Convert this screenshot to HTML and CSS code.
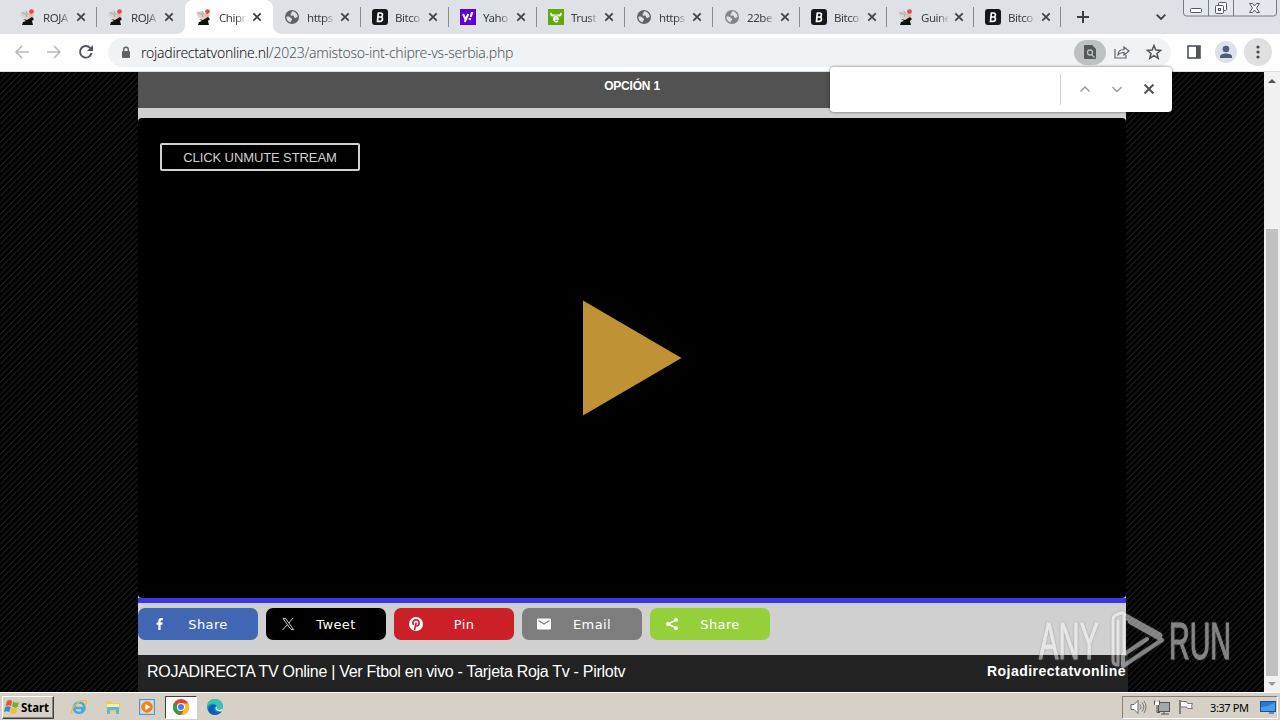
FILE: index.html
```html
<!DOCTYPE html>
<html lang="es">

<head>
    <meta charset="UTF-8">
    <meta name="viewport" content="width=device-width, initial-scale=1.0">
    <title>Chipre vs Serbia</title>
    <link rel="stylesheet" href="styles.css">
</head>

<body>
    <!-- shared icons -->
    <svg class="sprite">
        <symbol id="roja" viewBox="0 0 16 16">
            <path d="M0 3l5-1 4 2 3 1-1 5-4 1-5-3z" fill="#d5d4cf" />
            <path d="M2 4l4 1 1 3M6 2l2 4" stroke="#aaa9a2" fill="none" />
            <path d="M9 4l5 2-2 3-3-1z" fill="#efb5a2" />
            <circle cx="11.500" cy="2.600" r="2.400" fill="#dc4b52" />
            <path d="M3 10l4 1 5-3 2 2-2 2 1 4H2l1-3 3-1z" fill="#111" />
        </symbol>
        <symbol id="globe" viewBox="0 0 16 16">
            <circle cx="8" cy="8" r="7" fill="currentColor" />
            <path d="M8.500 2.300c-1.500.7-1.500 1.600-.5 2-1 .2-1.800.800-1.500 1.700.3.900 1.500.7 2.300.6.900 0 1.200.7 1.300 1.600.2.900 1.500.8 2.300.3l1.200-.5a5.600 5.600 0 0 0-5.100-5.700zM2.500 7.600c1.700-.1 3.600.1 4 1.100.3.900 1.800.6 1.700 1.700 0 .8-1.300.8-1.400 1.600l-.1 1.500A5.600 5.600 0 0 1 2.500 7.600z" fill="#dee1e6" />
        </symbol>
        <symbol id="bit" viewBox="0 0 16 16">
            <rect width="16" height="16" rx="3" fill="#15181b" />
            <path d="M5.700 4h2.800c2.600 0 2.500 3.700.3 4 2.500.3 2.100 4.300-.800 4.300H5.500L6.300 4M6 8h3" stroke="#fff" stroke-width="1.700" fill="none" />
        </symbol>
        <symbol id="yahoo" viewBox="0 0 16 16">
            <rect width="16" height="16" fill="#5f01d1" />
            <path d="M3 5l2.400 5M8.300 5l-3.600 8" stroke="#fff" stroke-width="2" fill="none" />
            <path d="M11 3h2.400l-1.700 5H9.800z" fill="#fff" />
            <circle cx="9.800" cy="10" r="1.200" fill="#fff" />
        </symbol>
        <symbol id="trust" viewBox="0 0 16 16">
            <rect width="16" height="16" fill="#66a80c" />
            <path d="M3.500 3C1 5 2.500 8 5.500 7.500L6.500 6.500h3l1 1C13.500 8 15 5 12.500 3c.4 2-1 2.500-2.500 2.500H6C4.500 5.500 3 5 3.500 3z" fill="#fff" />
            <path d="M5.800 10h4.200c0-3-4.200-3-4.200 0 0 3 3 3.300 4.200 1.700" stroke="#fff" stroke-width="1.500" fill="none" />
        </symbol>
        <symbol id="x" viewBox="0 0 10 10">
            <path d="M1.300 1.300l7.400 7.400M8.700 1.300L1.300 8.700" stroke="currentColor" stroke-width="1.700" />
        </symbol>
    </svg>

    <div class="tabs">
        <div class="tab"><svg class="fav"><use href="#roja" /></svg><span>ROJA</span><svg class="close"><use href="#x" /></svg></div>
        <div class="tab no-line"><svg class="fav"><use href="#roja" /></svg><span>ROJA</span><svg class="close"><use href="#x" /></svg></div>
        <div class="tab active"><svg class="fav"><use href="#roja" /></svg><span>Chipr</span><svg class="close"><use href="#x" /></svg></div>
        <div class="tab"><svg class="fav"><use href="#globe" /></svg><span>https</span><svg class="close"><use href="#x" /></svg></div>
        <div class="tab"><svg class="fav"><use href="#bit" /></svg><span>Bitco</span><svg class="close"><use href="#x" /></svg></div>
        <div class="tab"><svg class="fav"><use href="#yahoo" /></svg><span>Yaho</span><svg class="close"><use href="#x" /></svg></div>
        <div class="tab"><svg class="fav"><use href="#trust" /></svg><span>Trust</span><svg class="close"><use href="#x" /></svg></div>
        <div class="tab"><svg class="fav"><use href="#globe" /></svg><span>https</span><svg class="close"><use href="#x" /></svg></div>
        <div class="tab narrow"><svg class="fav light"><use href="#globe" /></svg><span>22be</span><svg class="close"><use href="#x" /></svg></div>
        <div class="tab narrow"><svg class="fav"><use href="#bit" /></svg><span>Bitco</span><svg class="close"><use href="#x" /></svg></div>
        <div class="tab narrow"><svg class="fav"><use href="#roja" /></svg><span>Guine</span><svg class="close"><use href="#x" /></svg></div>
        <div class="tab narrow"><svg class="fav"><use href="#bit" /></svg><span>Bitco</span><svg class="close"><use href="#x" /></svg></div>
        <svg class="plus" viewBox="0 0 12 12"><path d="M6 0v12M0 6h12" stroke="#3c4043" stroke-width="2" /></svg>
        <svg class="chevron" viewBox="0 0 10 6"><path d="M.7.7L5 5 9.300.7" stroke="#3c4043" stroke-width="1.800" fill="none" /></svg>
        <svg class="window-buttons" viewBox="0 0 94 17">
            <path d="M.5 0v13q0 3 3 3h87q3 0 3-3V0M25.500 0v16M50.500 0v16" stroke="#777b88" fill="#e4e7eb" />
            <g stroke="#535866" fill="#fff">
                <rect x="7.500" y="8.500" width="11" height="4" rx="1" />
                <rect x="35.500" y="2.500" width="8" height="8" rx="1" />
                <rect x="32.500" y="5.500" width="8" height="8" rx="1" />
                <rect x="35.500" y="8.500" width="2" height="2" />
                <path d="M66.500 3.500h3l2 2.500 2-2.500h3l-3 4.500 3 4.500h-3l-2-2.500-2 2.500h-3l3-4.500z" />
            </g>
        </svg>
    </div>

    <div class="toolbar">
        <svg class="nav" viewBox="0 0 16 16"><path d="M15 8H2M8 2L2 8l6 6" /></svg>
        <svg class="nav" viewBox="0 0 16 16"><path d="M1 8h13M8 2l6 6-6 6" /></svg>
        <svg class="nav reload" viewBox="0 0 16 16"><path d="M13.500 9A5.800 5.800 0 1 1 12.200 4l1.500 1.500" /><path class="solid" d="M15 1v6H9z" /></svg>
        <div class="address">
            <svg class="lock" viewBox="0 0 10 13"><rect x="1" y="5" width="8" height="7" rx="1" fill="#5f6368" /><path d="M2.700 5V3.500a2.300 2.300 0 0 1 4.600 0V5" stroke="#5f6368" stroke-width="1.400" fill="none" /></svg>
            <span class="url"><b>rojadirectatvonline.nl</b>/2023/amistoso-int-chipre-vs-serbia.php</span>
            <span class="find-icon">
                <svg width="12" height="14" viewBox="0 0 12 14"><path d="M1 0h7l4 4v9q0 1-1 1H1q-1 0-1-1V1q0-1 1-1z" fill="#53585b" /><circle cx="6" cy="7.500" r="2.500" stroke="#bdc1c1" stroke-width="1.300" fill="none" /><path d="M7.500 9.500l3 3" stroke="#bdc1c1" stroke-width="1.300" /></svg>
            </span>
            <svg class="share-page" viewBox="0 0 16 14"><path d="M1 4v9h11v-3M4 10c0-4 2-5.500 6-5.500V2l5 4-5 4V7.500C7 7.500 5.500 8 4 10z" stroke="#5f6368" stroke-width="1.200" fill="none" /></svg>
            <svg class="star" viewBox="0 0 14 14"><path d="M7 1.300l1.600 4 4.300.3-3.300 2.700 1.100 4.200L7 10.200l-3.700 2.300 1.100-4.200L1.100 5.600l4.300-.3z" stroke="#505459" stroke-width="1.300" fill="none" /></svg>
        </div>
        <svg class="panel" viewBox="0 0 14 14"><rect x="1" y="1" width="12" height="12" stroke="#505459" stroke-width="1.600" fill="none" /><path d="M9 1h4v12H9z" fill="#505459" /></svg>
        <svg class="avatar" viewBox="0 0 22 22"><circle cx="11" cy="11" r="11" fill="#dde1ea" /><circle cx="11" cy="8" r="3.300" fill="#505c7c" /><path d="M5 17v-1.500c0-4 12-4 12 0V17z" fill="#505c7c" /></svg>
        <svg class="menu" viewBox="0 0 28 28"><circle cx="14" cy="14" r="14" fill="#e0e0e0" /><g fill="#45494d"><circle cx="14" cy="9" r="1.600" /><circle cx="14" cy="14" r="1.600" /><circle cx="14" cy="19" r="1.600" /></g></svg>
    </div>

    <div class="viewport">
        <div class="page">
            <div class="option">OPCIÓN 1</div>
            <div class="player">
                <button class="unmute">CLICK UNMUTE STREAM</button>
                <svg class="play" viewBox="0 0 99 116"><path d="M0 .5L98.500 58 0 115.500z" fill="#be9235" /></svg>
            </div>
            <div class="share-row">
                <a class="share facebook"><svg viewBox="0 0 16 16"><path d="M6.300 14V8.800H4.600V6.600h1.700V5c0-2 1.200-3 2.800-3h1.700v2.200H9.600c-.7 0-1 .4-1 1v1.400h2.100l-.3 2.200H8.600V14z" /></svg><span>Share</span></a>
                <a class="share twitter"><svg viewBox="0 0 16 16"><path d="M3 2.500h2.500l8 11H11zM13 2L9 7M7 9l-4.500 5" fill="none" stroke="#fff" stroke-width=".8" /></svg><span>Tweet</span></a>
                <a class="share pinterest"><svg viewBox="0 0 16 16"><circle cx="8" cy="8" r="7" /><path d="M5.500 9C3.500 5 7 3.500 9 4c3.500 1 2 6 0 6-1 0-1.500-.4-1.500-1M8.200 6.500L6.500 14" fill="none" stroke="#cb2027" stroke-width="1.600" /></svg><span>Pin</span></a>
                <a class="share email"><svg viewBox="0 0 16 16"><rect x="1" y="2.500" width="14" height="11" rx="1.300" /><path d="M2.500 4.500L8 8l5.500-3.500" fill="none" stroke="#7d7d7d" stroke-width="1.300" /></svg><span>Email</span></a>
                <a class="share sharethis"><svg viewBox="0 0 16 16"><path d="M12 4L4 8l8 4" fill="none" stroke="#fff" stroke-width="1.400" /><circle cx="12" cy="3.800" r="1.900" /><circle cx="4" cy="8" r="1.900" /><circle cx="12" cy="12.200" r="1.900" /></svg><span>Share</span></a>
            </div>
            <div class="footer">
                <span class="footer-title">ROJADIRECTA TV Online | Ver Ftbol en vivo - Tarjeta Roja Tv - Pirlotv</span>
                <b class="footer-brand">Rojadirectatvonline</b>
            </div>
        </div>
        <div class="scrollbar">
            <svg viewBox="0 0 8 4"><path d="M0 4l4-4 4 4z" fill="#505050" /></svg>
            <div class="thumb"></div>
            <svg viewBox="0 0 8 4"><path d="M0 0l4 4 4-4z" fill="#9a9a9a" /></svg>
        </div>
    </div>

    <div class="find-bar">
        <div class="find-line"></div>
        <svg viewBox="0 0 10 10"><path d="M.5 7.500L5 3l4.500 4.500" stroke="#999c9f" stroke-width="1.500" fill="none" /></svg>
        <svg viewBox="0 0 10 10"><path d="M.5 3L5 7.500 9.500 3" stroke="#999c9f" stroke-width="1.500" fill="none" /></svg>
        <svg class="find-close" viewBox="0 0 10 10"><use href="#x" /></svg>
    </div>

    <div class="watermark">
        <span class="wm-any">ANY</span>
        <svg viewBox="0 0 58 62"><g fill="none" stroke="#fff" stroke-linejoin="round" stroke-linecap="round"><path d="M15 44V5q0-3-3-2L7 5Q4 6 4 10v40q0 5 5 5" stroke-width="3" /><path d="M9 11v42M15 4l36 20q2 1 0 3L18 9" stroke-width="3" /><path d="M21 12l32 18-39 26V45l24-16" stroke-width="4" /></g></svg>
        <span class="wm-run">RUN</span>
    </div>

    <div class="taskbar">
        <div class="start">
            <svg viewBox="0 0 16 16"><path d="M3 2q3-2 5 0L7 7Q5 5.500 1.500 7z" fill="#e8562b" /><path d="M9 2.500q3 2 6 .5l-1.500 5Q11 9.500 8 7.500z" fill="#76ae38" /><path d="M1.300 8q3-1.500 5.500 0l-1.500 5Q3 11.500 0 13z" fill="#3c84cb" /><path d="M7.500 8.500q3 2 6 .5l-1.500 5q-3 1.500-6-.5z" fill="#f4bd29" /></svg>
            <span>Start</span>
        </div>
        <div class="task">
            <svg viewBox="0 0 16 16"><path d="M4 9h9.500c.3-7.500-10.500-7.500-10.500 0 0 5.500 7.500 6.500 10 2H10" fill="none" stroke="#49a9df" stroke-width="2.500" /><path d="M1 14C-1 10 9-1 15 2c1 1 0 3-1 4" fill="none" stroke="#e8bd44" stroke-width="1.300" /></svg>
        </div>
        <div class="task">
            <svg viewBox="0 0 16 16"><path d="M1 2h5l1 2h8v9H1z" fill="#e8cc68" /><path d="M2 5h12v4H2z" fill="#f8edb0" /><path d="M2 15V9q0-1 1-1h10q1 0 1 1v6h-3v-4H5v4z" fill="#62b6dc" /></svg>
        </div>
        <div class="task">
            <svg viewBox="0 0 16 16"><rect x=".5" y=".5" width="15" height="15" fill="#b8d4ea" stroke="#5d93bf" /><rect x="2.500" y="2.500" width="11" height="11" fill="#dce9f2" /><circle cx="8" cy="8" r="5.800" fill="#ef8516" /><path d="M6.300 4.800l5 3.200-5 3.200z" fill="#fff" /></svg>
        </div>
        <div class="task running">
            <svg viewBox="0 0 16 16"><circle cx="8" cy="8" r="8" fill="#e04434" /><path d="M1.100 4L8 16A8 8 0 0 1 1.100 4z" fill="#2f9e4d" /><path d="M8 16L11.500 10 8 4.500h7.200A8 8 0 0 1 8 16z" fill="#fbc116" /><path d="M1.100 4l3.400 6L8 12l-1.500 3.800A8 8 0 0 1 1.100 4z" fill="#2f9e4d" /><circle cx="8" cy="8" r="4" fill="#fff" /><circle cx="8" cy="8" r="3" fill="#4080ee" /></svg>
        </div>
        <div class="task">
            <svg viewBox="0 0 16 16"><circle cx="8" cy="8" r="8" fill="#1482cf" /><path d="M.5 6C3-2.500 15-1.500 16 7c0 4-5 4-6.500 2.500C11 7 8 4 4.500 5 2 5.500 1 7 .3 9z" fill="#34c5b4" /><path d="M9 7c-4 1-2 6 1 6.500 2 .3 4-.5 5-1.500C11 18 1 16.500 1.500 10 2 6.500 6 5 9 7z" fill="#125daf" /><path d="M9.500 7.500c1 1 0 2 .5 2.500 2 1 4.500 1 6-1-.3 2-1 3-1.500 3.300-4 .7-8-2.300-5-4.800z" fill="#e6eef0" /></svg>
        </div>
        <div class="tray">
            <svg viewBox="0 0 18 16"><path d="M2 5.500h3l4-4v13l-4-4H2z" fill="#fff" stroke="#666" /><path d="M11 5.500q2 2.500 0 5M13 3.500q3.500 4.500 0 9M15 2q4 6 0 12" fill="none" stroke="#777" /></svg>
            <svg viewBox="0 0 18 16"><rect x="5.500" y="3.500" width="11" height="9" fill="#a6a7a8" stroke="#555" /><path d="M8 15h8M11 12v3M1.500 1.500v4h5v-4M4 5.500v8h3" fill="none" stroke="#555" /><path d="M2 3h4v3H2z" fill="#fff" /></svg>
            <svg viewBox="0 0 18 16"><path d="M3 1v14" stroke="#666" stroke-width="1.500" /><path d="M3.500 2.500h6l1 2h5q-2 3 0 5h-5l-1-1.500h-6z" fill="#fff" stroke="#777" /></svg>
            <span class="clock">3:37 PM</span>
            <svg class="desktop" viewBox="0 0 16 14"><rect x=".5" y="1.500" width="15" height="10" fill="#2877d0" stroke="#194e94" /><path d="M1 7q7 0 14-5v9H1z" fill="#4d9beb" /><path d="M9 13h5" stroke="#204570" /></svg>
        </div>
    </div>
</body>

</html>
```
FILE: styles.css
```css
* {
    box-sizing: border-box;
}

body {
    margin: 0;
    width: 1280px;
    height: 720px;
    overflow: hidden;
    display: flex;
    flex-direction: column;
    position: relative;
    font-family: "Liberation Sans", Arial, sans-serif;
}

svg {
    display: block;
    flex: none;
}

.sprite {
    position: absolute;
    width: 0;
    height: 0;
}

/* tab strip */
.tabs {
    height: 34px;
    flex: none;
    display: flex;
    align-items: center;
    padding-left: 9px;
    background: #dee1e6;
    color: #3c4043;
}

.tab {
    width: 88px;
    height: 34px;
    display: flex;
    align-items: center;
    padding-left: 11px;
    background: linear-gradient(#85888d, #85888d) right 7px / 1px 20px no-repeat;
    font: 11.5px "Noto Sans", sans-serif;
    letter-spacing: -0.45px;
}

.tab.narrow {
    width: 87px;
}

.tab.no-line {
    background: none;
}

.tab.active {
    background: #fff;
    border-radius: 8px 8px 0 0;
    position: relative;
}

.tab.active::before,
.tab.active::after {
    content: "";
    position: absolute;
    bottom: 0;
    width: 8px;
    height: 8px;
}

.tab.active::before {
    left: -8px;
    background: radial-gradient(circle at 0 0, transparent 7.5px, #fff 8px);
}

.tab.active::after {
    right: -8px;
    background: radial-gradient(circle at 100% 0, transparent 7.5px, #fff 8px);
}

.fav {
    width: 16px;
    height: 16px;
    color: #5f6368;
}

.fav.light {
    color: #828488;
}

.tab span {
    width: 28px;
    margin: 0 7px 0 7px;
    white-space: nowrap;
    -webkit-mask-image: linear-gradient(90deg, #000 60%, transparent);
    mask-image: linear-gradient(90deg, #000 60%, transparent);
}

.close {
    width: 10px;
    height: 10px;
    margin-left: -2px;
}

.plus {
    width: 12px;
    height: 12px;
    margin-left: 16px;
}

.chevron {
    width: 10px;
    height: 6px;
    margin-left: 67px;
}

.window-buttons {
    width: 94px;
    height: 17px;
    margin-left: 17px;
    align-self: flex-start;
}

/* toolbar */
.toolbar {
    height: 38px;
    flex: none;
    display: flex;
    align-items: center;
    padding: 0 0 1px 14px;
    background: #fff;
    border-bottom: 1px solid #dcdee0;
}

.nav {
    width: 16px;
    height: 16px;
    margin-right: 16px;
    fill: none;
    stroke: #b7b9bc;
    stroke-width: 1.6;
}

.nav.reload {
    margin-right: 14px;
    stroke: #505459;
    stroke-width: 1.9;
}

.nav .solid {
    fill: #505459;
    stroke: none;
}

.address {
    width: 1063px;
    height: 29px;
    display: flex;
    align-items: center;
    padding-left: 13px;
    border-radius: 15px;
    background: #f0f3f5;
}

.lock {
    width: 10px;
    height: 13px;
    margin-right: 10px;
}

.url {
    width: 933px;
    padding-top: 1px;
    font: 300 14px "Noto Sans", sans-serif;
    letter-spacing: -0.25px;
    color: #50555a;
    white-space: nowrap;
}

.url b {
    font-weight: 300;
    color: #111;
}

.find-icon {
    width: 32px;
    height: 25px;
    display: flex;
    align-items: center;
    justify-content: center;
    border-radius: 13px;
    background: #bdc1c1;
}

.share-page {
    width: 16px;
    height: 14px;
    margin: 0 16px 0 8px;
}

.star {
    width: 16px;
    height: 16px;
}

.panel {
    width: 14px;
    height: 14px;
    margin-left: 16px;
}

.avatar {
    width: 22px;
    height: 22px;
    margin-left: 14px;
}

.menu {
    width: 28px;
    height: 28px;
    margin-left: 7px;
}

/* page */
.viewport {
    height: 620px;
    flex: none;
    display: flex;
    padding-left: 138px;
    background: repeating-linear-gradient(135deg, #000 0, #000 2px, #1e1e1e 3px, #000 4.243px);
}

.page {
    width: 988px;
    margin-right: 138px;
    background: #d0d0d0;
}

.option {
    height: 36px;
    padding-top: 7px;
    background: #525252;
    color: #fff;
    font-size: 12px;
    font-weight: bold;
    letter-spacing: -0.2px;
    line-height: 14px;
    text-align: center;
}

.player {
    height: 480px;
    margin-top: 10px;
    padding: 25px 22px 0;
    border-radius: 4px;
    background: #000;
}

.unmute {
    display: block;
    width: 200px;
    height: 28px;
    padding: 0;
    border: 2px solid #d0d0d0;
    border-radius: 2px;
    background: #000;
    color: #d0d0d0;
    font: 13px "Liberation Sans", sans-serif;
    letter-spacing: -0.1px;
}

.play {
    width: 99px;
    height: 116px;
    margin: 129px 0 0 423px;
}

.share-row {
    height: 57px;
    display: flex;
    gap: 8px;
    padding-top: 5px;
    border-top: 5px solid #3a38e8;
}

.share {
    width: 120px;
    height: 32px;
    display: flex;
    align-items: center;
    padding-left: 14px;
    border-radius: 7px;
    color: #fff;
    font: 13px "DejaVu Sans", Verdana, sans-serif;
    letter-spacing: 0.4px;
}

.share svg {
    width: 16px;
    height: 16px;
    fill: #fff;
}

.share span {
    flex: 1;
    padding-right: 10px;
    text-align: center;
}

.facebook {
    background: #4267b2;
}

.twitter {
    background: #000;
}

.pinterest {
    background: #cb2027;
}

.email {
    background: #7d7d7d;
}

.sharethis {
    background: #95d03a;
}

.footer {
    width: 990px;
    height: 37px;
    display: flex;
    justify-content: space-between;
    padding: 7px 2px 0 9px;
    background: #222;
    color: #fff;
    line-height: 20px;
    white-space: nowrap;
}

.footer-title {
    font-size: 16px;
    letter-spacing: -0.29px;
}

.footer-brand {
    margin-top: -1px;
    font-size: 14px;
    letter-spacing: 0.48px;
}

.scrollbar {
    width: 16px;
    display: flex;
    flex-direction: column;
    align-items: center;
    padding-top: 7px;
    background: #f1f1f1;
}

.scrollbar svg {
    width: 8px;
    height: 4px;
}

.thumb {
    width: 12px;
    height: 447px;
    margin: 146px 0 6px;
    background: #c1c1c1;
}

/* find popup over the page */
.find-bar {
    position: absolute;
    left: 830px;
    top: 67px;
    width: 342px;
    height: 45px;
    display: flex;
    align-items: center;
    justify-content: flex-end;
    gap: 22px;
    padding: 0 18px 1px 0;
    border-radius: 4px;
    background: #fff;
    box-shadow: 0 0 3px rgba(0, 0, 0, 0.6);
}

.find-bar svg {
    width: 10px;
    height: 10px;
}

.find-line {
    width: 1px;
    height: 31px;
    margin-right: -3px;
    background: #d3d5d7;
}

.find-bar .find-close {
    width: 12px;
    height: 12px;
    margin: 0 -1px;
    color: #505459;
}

.watermark {
    position: absolute;
    left: 1039px;
    top: 610px;
    width: 194px;
    height: 62px;
    display: flex;
    align-items: center;
    color: #fff;
    opacity: 0.5;
    font-size: 52px;
    line-height: 62px;
    -webkit-text-stroke: 1px #fff;
    filter: drop-shadow(0 0 1px #777);
}

.watermark span {
    flex: none;
    transform-origin: left center;
}

.wm-any {
    width: 70px;
    transform: scaleX(0.56);
}

.watermark svg {
    width: 58px;
    height: 62px;
}

.wm-run {
    width: 62px;
    margin-left: 2px;
    transform: scaleX(0.55);
}

/* taskbar */
.taskbar {
    height: 28px;
    flex: none;
    display: flex;
    align-items: center;
    padding: 1px 2px 0;
    border-top: 1px solid #fff;
    background: #d6d0c6;
}

.start {
    width: 52px;
    height: 23px;
    display: flex;
    align-items: center;
    gap: 1px;
    margin-right: 9px;
    padding-left: 1px;
    border: 1px solid;
    border-color: #fff #404040 #404040 #fff;
    box-shadow: inset -1px -1px #8b8780;
    font: bold 11.5px "Noto Sans", Tahoma, sans-serif;
    letter-spacing: -0.1px;
}

.start svg {
    width: 16px;
    height: 16px;
}

.task {
    width: 32px;
    height: 23px;
    display: flex;
    align-items: center;
    justify-content: center;
    margin-right: 2px;
}

.task svg {
    width: 16px;
    height: 16px;
}

.task.running {
    background: #fff;
    border: 1px solid;
    border-color: #404040 #fff #fff #404040;
}

.tray {
    width: 156px;
    height: 23px;
    display: flex;
    align-items: center;
    gap: 6px;
    margin-left: auto;
    padding-left: 6px;
    border: 1px solid;
    border-color: #85817a #fff #fff #85817a;
}

.tray svg {
    width: 18px;
    height: 16px;
}

.clock {
    width: 40px;
    margin: 0 4px 0 9px;
    font: 11px "Noto Sans", Tahoma, sans-serif;
    letter-spacing: -0.4px;
    white-space: nowrap;
}

.tray .desktop {
    width: 16px;
    height: 14px;
}
```
